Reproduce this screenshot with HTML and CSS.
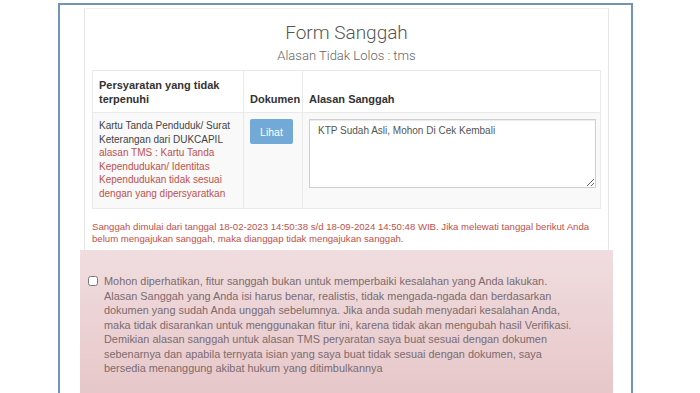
FILE: index.html
```html
<!DOCTYPE html>
<html lang="id">
<head>
    <meta charset="UTF-8">
    <meta name="viewport" content="width=device-width, initial-scale=1.0">
    <title>Form Sanggah</title>
    <link rel="stylesheet" href="styles.css">
</head>
<body>
    <div class="frame">
        <div class="panel">
            <h1 class="title">Form Sanggah</h1>
            <h2 class="subtitle">Alasan Tidak Lolos : tms</h2>
            <table class="sanggah-table">
                <thead>
                    <tr>
                        <th class="col-syarat">Persyaratan yang tidak terpenuhi</th>
                        <th class="col-dok">Dokumen</th>
                        <th>Alasan Sanggah</th>
                    </tr>
                </thead>
                <tbody>
                    <tr>
                        <td class="col-syarat">
                            Kartu Tanda Penduduk/ Surat Keterangan dari DUKCAPIL
                            <span class="text-danger">alasan TMS : Kartu Tanda Kependudukan/ Identitas Kependudukan tidak sesuai dengan yang dipersyaratkan</span>
                        </td>
                        <td class="col-dok"><button class="btn-lihat">Lihat</button></td>
                        <td><textarea class="alasan">KTP Sudah Asli, Mohon Di Cek Kembali</textarea></td>
                    </tr>
                </tbody>
            </table>
            <p class="note">Sanggah dimulai dari tanggal 18-02-2023 14:50:38 s/d 18-09-2024 14:50:48 WIB. Jika melewati tanggal berikut Anda<br>belum mengajukan sanggah, maka dianggap tidak mengajukan sanggah.</p>
        </div>
        <div class="alert">
            <input type="checkbox" class="agree">
            <p class="alert-text">Mohon diperhatikan, fitur sanggah bukan untuk memperbaiki kesalahan yang Anda lakukan.<br>Alasan Sanggah yang Anda isi harus benar, realistis, tidak mengada-ngada dan berdasarkan<br>dokumen yang sudah Anda unggah sebelumnya. Jika anda sudah menyadari kesalahan Anda,<br>maka tidak disarankan untuk menggunakan fitur ini, karena tidak akan mengubah hasil Verifikasi.<br>Demikian alasan sanggah untuk alasan TMS peryaratan saya buat sesuai dengan dokumen<br>sebenarnya dan apabila ternyata isian yang saya buat tidak sesuai dengan dokumen, saya<br>bersedia menanggung akibat hukum yang ditimbulkannya</p>
        </div>
    </div>
</body>
</html>
```

FILE: styles.css
```css
body {
    margin: 0;
    background: #fff;
    font-family: "Liberation Sans", Arial, sans-serif;
    color: #333;
    overflow: hidden;
}
.frame {
    display: flex;
    flex-direction: column;
    margin: 3px 0 0 58px;
    width: 533px;
    height: 388px;
    border: 2px solid #7195ba;
    border-bottom: none;
    padding: 3px 18px 0 20px;
    overflow: hidden;
}
.panel {
    margin: 0 4px;
    border: 1px solid #e6e6e6;
    border-top-color: #f0f0f0;
    border-bottom: none;
    padding: 8px 7px 6px 7px;
    height: 227px;
    flex-shrink: 0;
}
.title {
    margin: 4px 0 0;
    text-align: center;
    font-family: Roboto, "Liberation Sans", sans-serif;
    font-weight: 300;
    font-size: 19px;
    line-height: 24px;
    color: #555;
}
.subtitle {
    margin: 3px 0 6px;
    text-align: center;
    font-family: Roboto, "Liberation Sans", sans-serif;
    font-weight: 300;
    font-size: 13px;
    line-height: 16px;
    color: #666;
}
.sanggah-table {
    width: 100%;
    table-layout: fixed;
    border-collapse: collapse;
    border: 1px solid #eaeaea;
}
.sanggah-table th, .sanggah-table td {
    border: 1px solid #eaeaea;
    text-align: left;
    vertical-align: top;
}
.sanggah-table th {
    vertical-align: bottom;
    font-size: 11px;
    line-height: 14px;
    padding: 7px 6px 6px;
    color: #333;
}
.sanggah-table td {
    background: #f9f9f9;
    font-size: 10px;
    line-height: 13.5px;
    padding: 6px 6px 8px;
    color: #444;
}
.col-syarat {
    width: 138px;
}
.col-dok {
    width: 46px;
}
.text-danger {
    color: #c0514a;
}
.btn-lihat {
    background: #73a9d7;
    color: #fff;
    border: none;
    border-radius: 2px;
    width: 43px;
    height: 25px;
    font-family: "Liberation Sans", Arial, sans-serif;
    font-size: 10.5px;
    padding: 0;
}
.alasan {
    display: block;
    width: 287px;
    height: 69px;
    box-sizing: border-box;
    border: 1px solid #cfcfcf;
    box-shadow: inset 0 1px 1px rgba(0, 0, 0, 0.08);
    padding: 5px 8px;
    font-family: "Liberation Sans", Arial, sans-serif;
    font-size: 10px;
    color: #555;
    background: #fff;
    resize: vertical;
}
.note {
    margin: 12px 0 0;
    font-size: 9.6px;
    line-height: 12px;
    color: #c0514a;
}
.alert {
    display: flex;
    align-items: flex-start;
    gap: 6px;
    padding: 24px 8px 0;
    flex: 1;
    background: linear-gradient(to bottom, #f0dddf, #e7c7c9);
}
.agree {
    margin: 2px 0 0;
    width: 10px;
    height: 10px;
    flex-shrink: 0;
}
.alert-text {
    margin: 0;
    font-size: 10.9px;
    line-height: 14.5px;
    color: #7c6b6e;
    white-space: nowrap;
}
```
